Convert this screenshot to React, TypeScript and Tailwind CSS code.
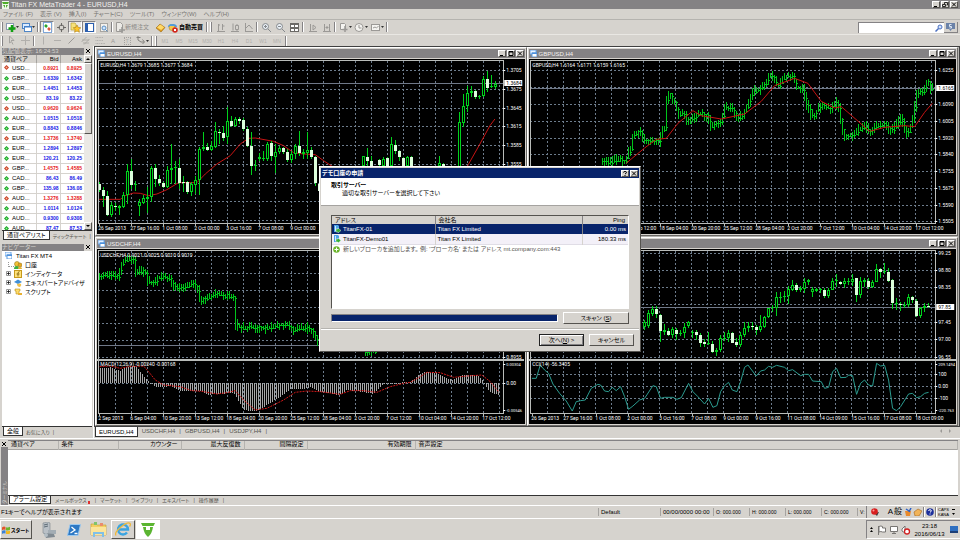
import React from "react";

const RAISED =
  "border border-t-white border-l-white border-r-[#55534f] border-b-[#55534f] bg-[#d6d3ce]";
const GREEN = "#00d21c";

type Pt = [number, number];

const parsePts = (s: string): Pt[] =>
  s
    .trim()
    .split(/\s+/)
    .map((p) => p.split(",").map(Number) as Pt);

// Series are recorded at three units per pixel from a chart origin.
const toLine = (s: string, ox: number, oy: number) =>
  parsePts(s)
    .map(([x, y]) => `${ox + x / 3},${oy + y / 3}`)
    .join(" ");

const valueAt = (pts: Pt[], x: number) => {
  for (let i = 1; i < pts.length; i++) {
    const [x0, y0] = pts[i - 1];
    const [x1, y1] = pts[i];
    if (x <= x1) return y0 + ((y1 - y0) * (x - x0)) / (x1 - x0 || 1);
  }
  return pts[pts.length - 1][1];
};

function Candles({ data, ox, oy }: { data: string; ox: number; oy: number }) {
  return (
    <g shapeRendering="crispEdges">
      {data
        .trim()
        .split(/\s+/)
        .map((c, i) => {
          const [x, hi, lo, top, bot, down] = c.split(",").map(Number);
          const px = Math.round(ox + x / 3);
          const y = (v: number) => Math.round(oy + v / 3);
          const h = Math.max(1, y(bot) - y(top));
          return (
            <g key={i}>
              <rect x={px} y={y(hi)} width={1} height={Math.max(1, y(lo) - y(hi))} fill={GREEN} />
              <rect x={px - 1} y={y(top)} width={3} height={h} fill={down ? "#dcffdc" : GREEN} />
              {!down && h > 2 && <rect x={px} y={y(top) + 1} width={1} height={h - 2} fill="#000" />}
            </g>
          );
        })}
    </g>
  );
}

function Bars({ data, ox, oy, seed }: { data: string; ox: number; oy: number; seed: number }) {
  const pts = parsePts(data);
  let s = seed * 7919;
  const rnd = () => {
    s = (s * 16807) % 2147483647;
    return s / 2147483647;
  };
  const out: React.ReactNode[] = [];
  for (let x = pts[0][0]; x <= pts[pts.length - 1][0]; x += 6) {
    const mid = valueAt(pts, x);
    const next = valueAt(pts, x + 6);
    const px = Math.round(ox + x / 3);
    const hi = Math.round(oy + (Math.min(mid, next) - 3 - rnd() * 14) / 3);
    const lo = Math.round(oy + (Math.max(mid, next) + 3 + rnd() * 14) / 3);
    const c = Math.round(oy + (mid + rnd() * 8 - 4) / 3);
    out.push(<rect key={x} x={px} y={hi} width={1} height={lo - hi} fill="#00c41a" />);
    out.push(<rect key={`t${x}`} x={px} y={c} width={2} height={1} fill="#00c41a" />);
  }
  return <g shapeRendering="crispEdges">{out}</g>;
}

interface ChartProps {
  ox: number;
  top: number;
  title: string;
  rows: number[];
  extraRows?: number[];
  prices: [number, string][];
  priceLine: [number, string];
  times: string[];
  timeStart: number;
  split?: number;
  bottom: number;
  note?: string;
  children: React.ReactNode;
}

function Chart(p: ChartProps) {
  const left = p.ox + 1;
  const right = p.ox + 406;
  const cols = Array.from({ length: 25 }, (_, i) => p.ox + 18 + i * 16);
  return (
    <svg
      viewBox={`${p.ox} ${p.top} 427 175`}
      className="block h-full w-full bg-black"
      fontFamily="Roboto,'Liberation Sans',sans-serif"
      fontSize="5"
      fill="#fff"
      role="img"
      aria-label={p.title}
    >
      <g stroke="#6d7c8c" strokeWidth="1" strokeDasharray="2 2" shapeRendering="crispEdges">
        {cols.map((x) => (
          <line key={x} x1={x + 0.5} x2={x + 0.5} y1={p.top + 2} y2={p.bottom} />
        ))}
        {[...p.rows, ...(p.extraRows ?? [])].map((y) => (
          <line key={y} x1={left} x2={right} y1={y + 0.5} y2={y + 0.5} />
        ))}
      </g>
      <rect x={left} y={p.priceLine[0]} width={right - left} height="1" fill="#6f7888" />
      {p.children}
      <g fill="#b9bcb9" shapeRendering="crispEdges">
        <rect x={left} y={p.top + 1} width={right - left} height="1" />
        <rect x={left} y={p.top + 1} width="1" height={p.bottom - p.top} />
        <rect x={right} y={p.top + 1} width="1" height={p.bottom - p.top} />
        <rect x={left} y={p.bottom} width={right - left} height="1" />
        {p.split && <rect x={p.ox} y={p.split} width="427" height="2" />}
        {p.times.map((_, i) => (
          <rect key={i} x={p.timeStart + 1 + i * 32} y={p.bottom} width="1" height="3" />
        ))}
      </g>
      <rect x={right + 1} y={p.priceLine[0] - 3} width="18" height="6" fill="#fff" />
      <text x={right + 3} y={p.priceLine[0] + 2} fill="#000">
        {p.priceLine[1]}
      </text>
      {p.prices.map(([y, t]) => (
        <g key={y + t}>
          <rect x={right} y={y} width="2" height="1" />
          <text x={right + 3} y={y + 2} fontSize={t.length > 6 ? 4 : 5}>
            {t}
          </text>
        </g>
      ))}
      <text x={p.ox + 3} y={p.top + 8}>
        {p.title}
      </text>
      {p.note && p.split && (
        <text x={p.ox + 3} y={p.split + 7}>
          {p.note}
        </text>
      )}
      {p.times.map((t, i) => (
        <text key={i} x={p.timeStart + i * 32} y={p.bottom + 7}>
          {t}
        </text>
      ))}
    </svg>
  );
}

const EUR_CANDLES = `27,415,445,420,437,1 39,430,490,438,457,1 51,440,516,457,514,1 63,475,518,484,514,0 75,478,500,486,490,1
87,483,512,487,491,0 99,445,492,452,489,0 111,360,480,381,452,0 123,345,435,381,422,1 135,412,440,421,423,0 147,465,515,475,485,0
159,452,480,463,476,0 171,430,508,460,465,0 183,365,475,372,460,0 195,360,430,371,406,1 207,393,425,404,417,1 219,415,432,417,429,1
231,366,432,378,430,0 243,300,420,373,378,0 255,350,420,370,373,0 267,345,435,371,416,1 279,395,445,414,417,1 291,410,450,415,443,1
303,415,455,421,443,0 315,395,450,408,422,0 327,308,452,315,408,0 339,265,320,308,314,0 351,298,322,308,318,1 363,290,322,306,318,0
375,235,312,262,308,0 387,255,300,263,268,1 399,245,290,267,282,1 411,190,300,230,280,0 423,215,250,230,245,1 435,220,250,224,247,0
447,218,240,224,231,1 459,222,260,229,256,1 471,250,310,256,307,1 483,265,392,307,366,1 495,348,380,362,366,0 507,328,350,340,345,0
519,320,350,343,346,0 531,294,350,300,346,0 543,292,350,298,336,1 555,300,388,324,338,0 567,306,330,313,324,0 579,310,330,313,324,1
591,315,355,323,347,1 603,320,357,331,347,0 615,300,345,307,331,0 627,262,335,305,327,1 639,315,345,325,329,0 651,265,345,318,328,0
663,310,345,318,339,1 675,335,425,338,418,1 687,415,445,420,440,1 819,335,365,337,366,0 831,312,365,338,352,1 843,335,365,352,365,1
867,345,365,348,362,1 879,340,365,345,365,0 891,338,365,342,365,1 903,280,365,300,365,0 915,288,330,302,322,1 927,318,350,322,340,1
939,340,365,342,365,1 951,335,365,338,365,0 963,335,365,338,365,1 1047,335,366,358,365,0 1059,356,366,360,366,1 1107,205,380,235,380,0
1119,150,248,187,236,0 1131,125,205,148,187,0 1143,125,158,142,148,0 1155,138,165,141,160,1 1167,152,165,157,160,0 1179,96,158,105,157,0
1191,80,145,105,131,1 1203,92,133,126,130,0 1215,112,135,119,128,0`;
const EUR_MA1 =
  "27,466 90,466 105,455 130,447 150,448 175,455 200,450 230,437 265,416 320,416 345,390 380,360 420,335 450,300 475,283 495,282 550,292 580,305 610,326 640,330 675,332 700,350 730,370";
const EUR_MA2 = "1125,380 1134,362 1169,300 1199,245 1214,225";

const GBP_BARS =
  "-87,350 -60,355 -35,345 -15,355 0,315 4,310 10,268 30,262 40,290 60,290 90,292 97,260 108,250 112,145 125,160 137,180 145,210 165,210 175,235 190,222 210,205 235,220 243,248 260,235 272,240 285,190 305,190 320,222 340,210 352,185 370,140 390,135 410,110 418,90 430,100 445,130 462,95 490,100 500,130 520,135 530,180 545,215 555,210 575,180 600,195 615,175 630,195 635,250 645,275 665,275 690,255 705,245 720,265 740,245 760,240 785,260 800,240 815,220 828,270 840,255 850,220 862,140 880,145 890,110 903,135";
const GBP_MA =
  "-15,358 0,345 40,312 75,286 105,283 140,238 185,200 210,215 270,225 340,210 390,172 430,125 490,103 530,118 570,172 610,192 630,188 650,205 715,262 760,250 820,245 850,248 880,205 903,178";

const CHF_BARS =
  "298,138 345,135 360,140 368,105 378,90 405,85 412,125 430,122 442,130 450,160 470,155 480,140 515,145 525,170 545,172 560,170 580,160 590,165 598,180 604,210 620,205 650,192 700,200 706,205 708,280 730,295 760,290 800,295 840,285 865,280 880,300 920,292 940,300 950,325 960,335";
const MACD =
  "300,415 330,412 345,418 360,422 380,410 405,408 420,425 440,450 450,458 465,470 490,472 510,468 540,482 570,484 600,484 620,494 660,492 700,487 715,515 730,540 750,543 770,542 800,525 840,500 870,478 900,478 930,472 960,485 1015,495 1040,480 1080,485 1120,492 1145,465 1170,458 1230,457 1250,438 1270,425 1300,427 1330,440 1355,450 1385,435 1430,435 1446,450 1460,475 1475,490 1499,495";
const SIGNAL =
  "298,410 330,408 360,415 385,410 430,408 445,425 465,450 490,465 540,470 575,482 605,484 650,492 680,488 705,482 730,510 765,540 800,535 850,510 885,487 920,483 960,485 1020,493 1050,482 1090,482 1130,487 1170,470 1210,460 1230,457 1260,440 1280,427 1320,428 1360,442 1400,438 1445,435 1470,455 1495,485";

const JPY_CANDLES = `40,255,285,262,275,0 52,225,278,235,274,0 64,213,242,222,236,0 76,213,250,222,238,1 88,237,320,240,288,1 100,268,300,286,292,0
112,278,302,287,300,1 124,275,310,283,300,0 136,280,315,284,296,1 148,285,302,293,296,0 160,265,310,275,295,0 172,258,278,262,274,0
184,285,310,290,293,0 196,285,315,292,300,1 208,295,335,300,325,1 220,312,335,322,327,1 232,290,330,325,328,0 244,318,355,326,350,1
256,338,362,345,350,0 268,300,350,308,345,0 280,290,318,308,312,0 292,285,320,294,310,0 304,290,325,294,324,1 316,308,335,322,330,1
328,290,335,300,330,0 340,262,305,278,300,0 352,262,290,272,278,0 364,262,285,274,277,1 376,270,300,277,284,1 388,240,290,274,284,0
400,243,280,245,276,0 412,218,250,220,246,0 424,210,232,217,220,0 436,172,243,187,218,0 448,170,205,185,190,0 460,168,200,182,186,0
472,152,208,163,182,0 484,135,168,150,164,0 496,145,172,150,164,1 508,152,172,160,164,0 520,130,175,142,163,0 532,132,150,136,142,0
544,155,185,163,172,0 556,160,172,163,168,0 568,158,175,162,166,0 580,160,188,164,183,1 592,160,188,164,183,0 604,130,165,137,164,0
616,118,155,135,139,0 628,138,150,140,146,1 640,130,158,138,147,0 652,128,150,137,140,0 664,118,152,133,140,0 676,128,200,130,180,1
688,125,190,138,180,0 700,128,155,136,142,0 712,130,162,138,157,1 724,135,158,140,155,0 736,88,142,102,141,0 748,98,130,102,110,1
760,83,118,107,111,0 772,100,142,110,137,1 784,132,222,136,204,1 796,190,225,204,207,0 808,202,228,207,210,1 820,200,220,210,213,0
832,178,215,187,211,0 844,182,205,187,196,1 856,192,245,197,242,1 868,215,250,218,242,0 880,205,230,213,218,0 892,205,220,212,217,1`;
const CCI =
  "-298,430 -285,430 -273,390 -260,405 -248,415 -235,447 -215,475 -195,498 -177,528 -165,500 -152,497 -138,495 -120,460 -100,448 -92,450 -80,468 -68,470 -57,457 -45,467 -32,455 -20,485 -8,523 5,513 25,495 40,490 65,452 75,455 88,490 100,487 125,487 137,493 150,488 172,445 185,470 200,485 220,507 232,490 245,517 257,512 268,470 280,452 292,442 303,465 317,470 328,440 340,397 350,390 375,423 388,408 400,405 412,394 424,397 436,391 460,397 472,407 484,404 508,422 520,418 532,418 544,438 570,440 580,460 592,457 604,410 616,400 628,428 645,427 652,420 664,422 676,478 688,445 700,435 712,450 724,453 736,385 748,393 760,391 772,435 784,520 796,527 808,515 832,477 844,475 856,488 868,485 880,475 892,472";

const OCT = ["18 Sep 04:00", "20 Sep 20:00", "25 Sep 12:00", "28 Sep 04:00", "2 Oct 20:00", "7 Oct 12:00", "10 Oct 04:00", "14 Oct 20:00", "17 Oct 12:00"];
const SHORT = ["26 Sep 2013", "27 Sep 16:00", "1 Oct 08:00", "2 Oct 00:00", "3 Oct 16:00", "7 Oct 08:00", "9 Oct 00:00", "9 Oct 16:00", "11 Oct 08:00", "14 Oct 09:00", "15 Oct 16:00", "17 Oct 08:00", "18 Oct 09:00"];
const LONG = ["2 Sep 2013", "6 Sep 04:00", "10 Sep 20:00", "13 Sep 12:00", ...OCT];

function EurChart() {
  return (
    <Chart
      ox={97}
      top={59}
      bottom={223}
      title="EURUSD,H4  1.3679 1.3685 1.3677 1.3684"
      rows={[70, 89, 108, 126, 145, 164, 183, 201, 220]}
      prices={[[70, "1.3705"], [89, "1.3675"], [108, "1.3645"], [126, "1.3615"], [145, "1.3585"], [164, "1.3555"], [183, "1.3525"], [201, "1.3495"], [220, "1.3465"]]}
      priceLine={[83, "1.3684"]}
      times={SHORT}
      timeStart={98}
    >
      <polyline points={toLine(EUR_MA1, 90, 44)} fill="none" stroke="#c81414" />
      <polyline points={toLine(EUR_MA2, 90, 44)} fill="none" stroke="#c81414" />
      <Candles data={EUR_CANDLES} ox={90} oy={44} />
    </Chart>
  );
}

function GbpChart() {
  return (
    <Chart
      ox={528}
      top={59}
      bottom={223}
      title="GBPUSD,H4  1.6164 1.6171 1.6159 1.6165"
      rows={[70, 87, 104, 121, 138, 154, 171, 188, 205, 221]}
      prices={[[70, "1.6255"], [104, "1.6090"], [121, "1.6005"], [138, "1.5920"], [154, "1.5840"], [171, "1.5755"], [188, "1.5675"], [205, "1.5590"], [221, "1.5505"]]}
      priceLine={[88, "1.6165"]}
      times={LONG}
      timeStart={530}
    >
      <Bars data={GBP_BARS} ox={630} oy={44} seed={7} />
      <polyline points={toLine(GBP_MA, 630, 44)} fill="none" stroke="#c81414" />
    </Chart>
  );
}

function ChfChart() {
  const pts = parsePts(MACD);
  const hist: React.ReactNode[] = [];
  for (let x = 300; x <= 1499; x += 6) {
    const y = Math.round(230 + valueAt(pts, x) / 3);
    const t = Math.min(y, 383);
    hist.push(<rect key={x} x={x / 3} y={t} width="1" height={Math.max(1, Math.abs(y - 383))} />);
  }
  return (
    <Chart
      ox={97}
      top={249}
      bottom={413}
      split={359}
      title="USDCHF,H4  0.9021 0.9025 0.9010 0.9019"
      note="MACD(12,26,9) -0.00240 -0.00168"
      rows={[256, 273, 290, 307, 323, 340, 357]}
      extraRows={[383]}
      prices={[[256, "0.9390"], [357, "0.8955"], [364, "0.00304"], [383, "0.00"], [410, "-0.00546"]]}
      priceLine={[345, "0.9019"]}
      times={LONG}
      timeStart={98}
    >
      <Bars data={CHF_BARS} ox={0} oy={230} seed={21} />
      <Bars data="1095,362 1125,362" ox={0} oy={230} seed={3} />
      <g fill="#a8a8a8" shapeRendering="crispEdges">{hist}</g>
      <polyline points={toLine(SIGNAL, 0, 230)} fill="none" stroke="#d01818" strokeDasharray="2 1" />
    </Chart>
  );
}

function JpyChart() {
  return (
    <Chart
      ox={528}
      top={249}
      bottom={413}
      split={359}
      title="USDJPY,H4  97.90 97.93 97.78 97.85"
      note="CCI(14) -56.3405"
      rows={[253, 270, 287, 304, 322, 339, 357]}
      extraRows={[374, 386, 398]}
      prices={[[253, "99.25"], [270, "98.80"], [287, "98.35"], [322, "97.45"], [339, "97.00"], [357, "96.55"], [364, "209.1494"], [374, "100"], [386, "0.00"], [398, "-100"], [410, "-220.763"]]}
      priceLine={[307, "97.85"]}
      times={SHORT}
      timeStart={530}
    >
      <Candles data={JPY_CANDLES} ox={630} oy={235} />
      <polyline points={toLine(CCI, 630, 235)} fill="none" stroke="#2b9c90" />
    </Chart>
  );
}

function WindowsMark({ className = "" }: { className?: string }) {
  return (
    <svg viewBox="0 0 7 7" className={`h-[7px] w-[7px] shrink-0 ${className}`} aria-hidden="true">
      <rect x="0" y="0" width="6" height="4" fill="#e8f3ff" stroke="#6aa6e8" />
      <rect x="2" y="3" width="5" height="4" fill="#fff" stroke="#5b9be0" />
      <rect x="2" y="2.500" width="5" height="1.500" fill="#4d90dc" />
    </svg>
  );
}

function CaptionButton({ kind }: { kind: "min" | "max" | "restore" | "close" | "help" }) {
  return (
    <button
      aria-label={kind}
      className={`${RAISED} flex h-[7px] w-2 shrink-0 items-center justify-center`}
    >
      <svg viewBox="0 0 6 5" className="h-[5px] w-[6px]" stroke="#000" fill="none">
        {kind === "min" && <path d="M1 4.500h3" />}
        {kind === "max" && <path d="M1 .5h4v4h-4zM1 1h4" />}
        {kind === "restore" && <path d="M2.500 2v-1.500h3v2.500h-1M.5 2.500h3v2h-3z" strokeWidth=".8" />}
        {kind === "close" && <path d="M1 .5l4 4M5 .5l-4 4" />}
        {kind === "help" && <path d="M1.500 1.500q0-1 1.500-1t1.500 1q0 .8-1.500 1.500M3 4v1" />}
      </svg>
    </button>
  );
}

function ChartWindow({ title, children }: { title: string; children: React.ReactNode }) {
  return (
    <section className="flex min-h-0 min-w-0 flex-col border border-t-white border-r-[#6b6966] border-b-[#6b6966] border-l-white bg-[#d6d3ce] p-px">
      <header className="flex h-[9px] items-center gap-px bg-[#848284] px-px text-[#f3f1ee]">
        <WindowsMark />
        <h2 className="flex-1 pl-px">{title}</h2>
        <div className="flex gap-px">
          <CaptionButton kind="min" />
          <CaptionButton kind="max" />
          <CaptionButton kind="close" />
        </div>
      </header>
      <div className="mt-px min-h-0 flex-1 bg-black">{children}</div>
    </section>
  );
}

function Icon({ name }: { name: string }) {
  const g = "#9b9996";
  const art: Record<string, React.ReactNode> = {
    newchart: (
      <>
        <rect x="1.500" y="1.500" width="7" height="6" fill="#fff" stroke="#8a9ab0" />
        <path d="M7 3v7M3.500 6.500h7" stroke="#13a013" strokeWidth="2.500" />
      </>
    ),
    profiles: (
      <>
        <rect x="1.500" y="1.500" width="7" height="5" fill="#dcecff" stroke="#4f86c6" />
        <rect x="3.500" y="4.500" width="7" height="5" fill="#fff" stroke="#4f86c6" />
        <path d="M3 5h8" stroke="#3b7cd0" />
      </>
    ),
    market: (
      <>
        <rect x="1.500" y=".5" width="8" height="10" fill="#fff" stroke="#7fa6d8" />
        <path d="M3 3l2 2" stroke="#2aa42a" strokeWidth="2.500" />
        <path d="M6 6l2 2" stroke="#e0523a" strokeWidth="2.500" />
      </>
    ),
    cross: (
      <g stroke="#6b6966" fill="none">
        <circle cx="5.500" cy="5.500" r="2.500" />
        <path d="M5.500 1v3M5.500 7v3M1 5.500h3M7 5.500h3" />
      </g>
    ),
    star: (
      <>
        <path d="M1 1h4l1 1v6h-5z" fill="#f7e27a" stroke="#b39a2c" strokeWidth=".6" />
        <path d="M7 3l1.200 2.400 2.600.3-1.900 1.900.5 2.700-2.400-1.300-2.400 1.300.5-2.700-1.900-1.900 2.600-.3z" fill="#ffc72c" stroke="#a87a0c" strokeWidth=".6" />
      </>
    ),
    panel: (
      <>
        <rect x="1.500" y="1.500" width="8" height="8" fill="#fff" stroke="#2d5fae" />
        <rect x="1" y="1" width="3" height="9" fill="#2d5fae" />
      </>
    ),
    tester: (
      <>
        <rect x="2.500" y="1.500" width="7" height="8" fill="#f3f1ed" stroke="#a7a5a1" />
        <circle cx="6" cy="6" r="2" fill="#cfe6ff" stroke="#5b8fc4" />
        <path d="M7.500 7.500l2 2" stroke="#5b8fc4" />
      </>
    ),
    order: (
      <g fill="none" stroke={g}>
        <path d="M2.500.5h4l2 2v7h-6z" fill="#ebe9e5" />
        <path d="M8 5v6M5 8h6" strokeWidth="1.500" />
      </g>
    ),
    gold: (
      <>
        <path d="M1 6l4-4 5 3.500-4 4.500z" fill="#e09a1c" stroke="#9a6a10" strokeWidth=".6" />
        <path d="M2 5.500l3.200-3 4 2.800-3 2.700z" fill="#ffd968" />
      </>
    ),
    expert: (
      <>
        <path d="M1 5a4.500 3 0 0 1 9 0z" fill="#4d9be0" />
        <circle cx="5" cy="5.500" r="3" fill="#f3c64b" stroke="#a37a1a" strokeWidth=".5" />
        <path d="M1 4q4-4 8 0z" fill="#4d9be0" />
        <circle cx="8" cy="8" r="2.800" fill="#d3281e" />
        <rect x="7" y="7" width="2" height="2" fill="#fff" />
      </>
    ),
    bars: <path d="M2 9.500h8M3.500 2v7M3 3h2M7.500 2v6M7.500 4h2" stroke={g} fill="none" />,
    candle: <path d="M2 9.500h8M4 1.500v7M8 2v1M8 8v1M6.500 3.500h3v4h-3z" stroke={g} fill="none" />,
    line: <path d="M2 9.500h8M2.500 1v8M3 6l3-3 3.500 4" stroke={g} fill="none" />,
    zoomin: (
      <g fill="none" stroke="#85898d">
        <circle cx="4.500" cy="4.500" r="3" fill="#e8eef4" />
        <path d="M7 7l3 3M3 4.500h3M4.500 3v3" />
      </g>
    ),
    zoomout: (
      <g fill="none" stroke="#85898d">
        <circle cx="4.500" cy="4.500" r="3" fill="#e8eef4" />
        <path d="M7 7l3 3M3 4.500h3" />
      </g>
    ),
    tile: (
      <>
        <rect x="1" y="1" width="9" height="9" fill="#6b6966" />
        <path d="M2 3h3v2h-3zM6 3h3v2h-3zM2 7h3v2h-3zM6 7h3v2h-3z" fill="#fff" />
      </>
    ),
    shift: <path d="M2 9.500h8M3.500 2v7M6 3l3 2.500-3 2.500z" stroke={g} fill="none" />,
    scroll: <path d="M2 9.500h8M3.500 2v7M8.500 2v7M4.500 5.500h3M6 4v3" stroke={g} fill="none" />,
    indic: (
      <>
        <path d="M2.500 1.500h4l1 1v5h-5z" fill="#f5f4f1" stroke={g} />
        <path d="M7 4v6M4.500 7.500h5" stroke={g} strokeWidth="1.500" />
      </>
    ),
    clock: (
      <>
        <circle cx="5" cy="5.500" r="4" fill="#f5f4f1" stroke={g} />
        <path d="M5 3v3h2.500" stroke={g} fill="none" />
      </>
    ),
    templ: (
      <>
        <rect x="1.500" y="2.500" width="8" height="6" fill="#f5f4f1" stroke={g} />
        <path d="M3 6l2-1 1.500 1 2-2" stroke={g} fill="none" />
      </>
    ),
    cursor: <path d="M3.500 1v7l2-1.500 1.500 3M3.500 1l4.500 4.500h-3" stroke="#a5a3a0" fill="none" />,
    plus: <path d="M5.500 1v9M1 5.500h9" stroke="#b1afac" />,
    vline: <path d="M5.500 1.500v8" stroke="#b1afac" />,
    hline: <path d="M2 5.500h7" stroke="#b1afac" />,
    diag: <path d="M2.500 8.500l6-6" stroke={g} />,
    channel: <path d="M1.500 7l5-5M4 9.500l5.500-5.500M2 5h7M3 8h6" stroke="#a5a3a0" fill="none" strokeWidth=".8" />,
    fib: <path d="M1.500 2.500h8M1.500 5.500h8M1.500 8.500h5M7 8.500h4" stroke="#b1afac" strokeDasharray="1 .6" />,
    arrows: <path d="M1.500 2.500h4M3 1v4l3 2h3M7.500 4.500l2 2.500-2 2" stroke="#85837f" fill="none" />,
  };
  return (
    <svg viewBox="0 0 11 11" className="h-[11px] w-[11px] shrink-0" aria-hidden="true">
      {art[name]}
    </svg>
  );
}

function Tool({ name, pressed, drop }: { name: string; pressed?: boolean; drop?: boolean }) {
  return (
    <button
      aria-label={name}
      className={`flex h-3 shrink-0 items-center justify-center ${drop ? "w-4" : "w-[14px]"} ${
        pressed ? "border border-t-[#848284] border-r-white border-b-white border-l-[#848284] bg-[#ebe9e5]" : ""
      }`}
    >
      <Icon name={name} />
      {drop && (
        <svg viewBox="0 0 3 2" className="h-[2px] w-[3px]" aria-hidden="true">
          <path d="M0 0h3l-1.500 2z" fill="#333" />
        </svg>
      )}
    </button>
  );
}

const Handle = () => <span className="mx-px h-[10px] w-[2px] shrink-0 border-r border-l border-r-[#848284] border-l-white" />;
const Sep = () => <span className="mx-px h-[10px] w-[2px] shrink-0 border-r border-l border-r-white border-l-[#848284]" />;

function Toolbars() {
  return (
    <>
      <div className="flex h-[14px] items-center" role="toolbar">
        <Handle />
        <Tool name="newchart" drop />
        <Tool name="profiles" drop />
        <Sep />
        <Tool name="market" pressed />
        <Tool name="cross" />
        <Tool name="star" pressed />
        <Tool name="panel" pressed />
        <Tool name="tester" />
        <Sep />
        <button className="flex items-center text-[#8e8c89]">
          <Icon name="order" />
          新規注文
        </button>
        <span className="w-1" />
        <Tool name="gold" />
        <button className="flex items-center text-black">
          <Icon name="expert" />
          <span className="pl-px font-bold">自動売買</span>
        </button>
        <span className="w-[2px]" />
        <Sep />
        <Handle />
        <Tool name="bars" />
        <Tool name="candle" />
        <Tool name="line" />
        <Sep />
        <Tool name="zoomin" />
        <Tool name="zoomout" />
        <Tool name="tile" />
        <Sep />
        <Tool name="shift" />
        <Tool name="scroll" />
        <Sep />
        <Tool name="indic" drop />
        <Tool name="clock" drop />
        <Tool name="templ" drop />
        <Sep />
        <span className="flex-1" />
        <div className="mr-[2px] flex h-[11px] items-center">
          <label className="flex h-[11px] w-[86px] items-center border-t border-l border-[#848284] bg-white">
            <input aria-label="検索" className="h-2 w-full min-w-0 bg-white outline-none" />
            <svg viewBox="0 0 8 8" className="mr-px h-2 w-2 shrink-0" fill="none" stroke="#4a6fc0">
              <circle cx="5" cy="3" r="2" fill="#d5e4fa" />
              <path d="M3.500 4.500l-3 3" strokeWidth="1.500" />
            </svg>
          </label>
          <button aria-label="チャット" className="flex h-[11px] w-[14px] items-center justify-center border-r border-b border-[#848284]">
            <svg viewBox="0 0 9 8" className="h-2 w-[9px]">
              <path d="M0 0h9v6h-3l-1.500 2-1.500-2h-3z" fill="#6b82a8" />
              <path d="M5.500 1.500h-2v2h2v1.500h-2" stroke="#dfe8f5" fill="none" />
            </svg>
          </button>
        </div>
      </div>
      <div className="flex h-3 items-center border-t border-[#e9e7e3] text-[#b1afac]" role="toolbar">
        <Handle />
        <Tool name="cursor" />
        <Tool name="plus" />
        <Sep />
        <Tool name="vline" />
        <Tool name="hline" />
        <Tool name="diag" />
        <Tool name="channel" />
        <Tool name="fib" />
        <button className="w-[14px] text-center text-[#9b9996]">A</button>
        <button className="flex w-[14px] justify-center">
          <span className="w-[7px] border border-dotted border-[#a5a3a0] text-center leading-[6px]">T</span>
        </button>
        <Tool name="arrows" drop />
        <Sep />
        <Handle />
        {["M1", "M5", "M15", "M30", "H1", "H4", "D1", "W1", "MN"].map((t) => (
          <button key={t} className="w-[14px] text-center text-[5px]">
            {t}
          </button>
        ))}
        <Sep />
      </div>
    </>
  );
}

const QUOTES: [string, string, string, boolean][] = [
  ["USD...", "0.8921", "0.8925", false],
  ["GBP...", "1.6339", "1.6342", true],
  ["EUR...", "1.4451", "1.4453", true],
  ["USD...", "83.19", "83.22", true],
  ["USD...", "0.9620", "0.9624", false],
  ["AUD...", "1.0515", "1.0518", true],
  ["EUR...", "0.8843", "0.8846", true],
  ["EUR...", "1.3736", "1.3740", false],
  ["EUR...", "1.2894", "1.2897", true],
  ["EUR...", "120.21", "120.25", true],
  ["GBP...", "1.4575", "1.4585", false],
  ["CAD...", "86.43", "86.49", true],
  ["GBP...", "135.98", "136.08", true],
  ["AUD...", "1.3276", "1.3288", false],
  ["AUD...", "1.0114", "1.0124", true],
  ["AUD...", "0.9300", "0.9308", true],
  ["AUD...", "87.47", "87.53", true],
];

function PanelTitle({ children }: { children: React.ReactNode }) {
  return (
    <header className="flex h-2 shrink-0 items-center">
      <h2 className="h-[7px] flex-1 bg-[#848284] leading-[7px] whitespace-nowrap text-[#d6d3ce]">{children}</h2>
      <button aria-label="閉じる" className="flex h-[7px] w-2 items-center justify-center">
        <svg viewBox="0 0 4 4" className="h-1 w-1" stroke="#000">
          <path d="M0 0l4 4M4 0l-4 4" />
        </svg>
      </button>
    </header>
  );
}

function PanelTabs({ tabs }: { tabs: string[] }) {
  return (
    <div className="flex h-[10px] shrink-0 pl-px whitespace-nowrap" role="tablist">
      {tabs.map((t, i) => (
        <button
          key={t}
          role="tab"
          aria-selected={i === 0}
          className={
            i === 0
              ? "h-[9px] border border-t-0 border-[#333] bg-white px-[3px] text-black"
              : "h-[9px] pl-[3px] text-[5px] text-[#55534f] after:pl-[3px] after:content-['|']"
          }
        >
          {t}
        </button>
      ))}
    </div>
  );
}

function MarketWatch() {
  return (
    <section className="flex h-[194px] shrink-0 flex-col">
      <PanelTitle>気配値表示: 16:24:53</PanelTitle>
      <div className="flex min-h-0 flex-1 overflow-hidden border-b border-[#333] bg-white">
        <div className="flex-1 overflow-hidden">
          <table className="w-full table-fixed border-collapse">
            <thead>
              <tr className="h-2 bg-[#d6d3ce]">
                <th className="w-[34px] border-r border-[#a5a3a0] p-0 pl-[2px] text-left leading-[7px] font-normal">通貨ペア</th>
                <th className="border-r border-[#a5a3a0] p-0 pr-px text-right leading-[7px] font-normal">Bid</th>
                <th className="p-0 pr-[2px] text-right leading-[7px] font-normal">Ask</th>
              </tr>
            </thead>
            <tbody>
              {QUOTES.map(([s, b, a, up], i) => (
                <tr key={i} className="h-[10px] border-b border-[#d6d3ce]">
                  <td className="border-r border-[#d6d3ce] p-0">
                    <span className="flex items-center gap-[3px] pl-[2px]">
                      <svg viewBox="0 0 5 5" className="h-[5px] w-[5px]">
                        <path d="M2.500 0l2.500 2.500-2.500 2.500-2.500-2.500z" fill={up ? "#1ea82a" : "#c8452a"} />
                        <path d="M2.500 1.500l1 1-1 1-1-1z" fill={up ? "#8df08d" : "#ffb89c"} />
                      </svg>
                      {s}
                    </span>
                  </td>
                  <td className={`border-r border-[#d6d3ce] p-0 pr-px text-right text-[5px] font-bold ${up ? "text-[#1414e6]" : "text-[#e61414]"}`}>{b}</td>
                  <td className={`p-0 pr-[2px] text-right text-[5px] font-bold ${up ? "text-[#1414e6]" : "text-[#e61414]"}`}>{a}</td>
                </tr>
              ))}
            </tbody>
          </table>
        </div>
        <div className="flex w-2 flex-col bg-[#ebe9e5]">
          <button aria-label="上へ" className={`${RAISED} flex h-2 items-center justify-center`}>
            <svg viewBox="0 0 4 2" className="h-[2px] w-1"><path d="M0 2h4l-2-2z" /></svg>
          </button>
          <div className={`${RAISED} h-[71px]`} />
          <div className="flex-1" />
          <button aria-label="下へ" className={`${RAISED} flex h-2 items-center justify-center`}>
            <svg viewBox="0 0 4 2" className="h-[2px] w-1"><path d="M0 0h4l-2 2z" /></svg>
          </button>
        </div>
      </div>
      <PanelTabs tabs={["通貨ペアリスト", "ティックチャート"]} />
    </section>
  );
}

function TreeIcon({ kind }: { kind: number }) {
  return (
    <svg viewBox="0 0 8 8" className="h-2 w-2 shrink-0" aria-hidden="true">
      {kind === 0 && (
        <>
          <circle cx="3" cy="3" r="2.500" fill="#f3c23a" stroke="#8a6a10" strokeWidth=".5" />
          <circle cx="6" cy="4" r="2" fill="#e8a820" stroke="#8a6a10" strokeWidth=".5" />
          <path d="M0 8q0-3 2.500-3t2.500 3z" fill="#3fae3f" />
          <path d="M4 8q0-2 2-2t2 2z" fill="#e8b030" />
        </>
      )}
      {kind === 1 && (
        <>
          <rect x=".5" y=".5" width="7" height="7" fill="#ffe27a" stroke="#c79a1c" />
          <path d="M5.500 1.500q-1.500 0-1.500 2v3M2.500 4h3" stroke="#7a5a08" fill="none" strokeWidth=".8" />
        </>
      )}
      {kind === 2 && (
        <>
          <path d="M0 3l4-2.500 4 2.500-4 2z" fill="#3f8fd8" />
          <path d="M3 5q3-1 4 0t-1 3q-3 0-3-3z" fill="#f0c04a" />
        </>
      )}
      {kind === 3 && (
        <>
          <path d="M1 1h5v2h-1v3h-3v-3h-1z" fill="#ffdc6a" stroke="#b8901c" strokeWidth=".6" />
          <path d="M4 5h4v2h-4z" fill="#e8b030" />
        </>
      )}
    </svg>
  );
}

function Navigator() {
  return (
    <section className="mt-[2px] flex min-h-0 flex-1 flex-col">
      <PanelTitle>ナビゲーター</PanelTitle>
      <ul className="min-h-0 flex-1 border-b border-[#333] bg-white pl-[2px]">
        <li className="flex h-[9px] items-center gap-1 pl-px">
          <WindowsMark />
          Titan FX MT4
        </li>
        {["口座", "インディケータ", "エキスパートアドバイザ", "スクリプト"].map((t, i) => (
          <li key={t} className="flex h-[9px] items-center whitespace-nowrap">
            <span className="flex w-[10px] items-center pl-[2px]">
              {i > 0 ? (
                <svg viewBox="0 0 5 5" className="h-[5px] w-[5px]" fill="#fff" stroke="#999">
                  <path d="M.5.5h4v4h-4z" />
                  <path d="M1 2.500h3M2.500 1v3" stroke="#000" strokeWidth=".7" />
                </svg>
              ) : (
                <span className="ml-[2px] h-[5px] w-[6px] border-b border-l border-dotted border-[#999]" />
              )}
            </span>
            <TreeIcon kind={i} />
            <span className="pl-[3px]">{t}</span>
          </li>
        ))}
      </ul>
      <PanelTabs tabs={["全般", "お気に入り"]} />
    </section>
  );
}

function Terminal() {
  const cols: [string, string][] = [
    ["通貨ペア", "w-[50px] text-left"],
    ["条件", "w-[60px] text-left"],
    ["カウンター", "w-[63px] text-right"],
    ["最大反復数", "w-[63px] text-right"],
    ["間隔設定", "w-[63px] text-right"],
    ["有効期限", "w-[108px] text-right"],
    ["音声設定", "text-left"],
  ];
  return (
    <section className="flex h-[67px] shrink-0 border-t border-white pt-px">
      <div className="flex w-2 shrink-0 flex-col items-center">
        <button aria-label="閉じる" className="flex h-[7px] w-2 items-center justify-center">
          <svg viewBox="0 0 4 4" className="h-1 w-1" stroke="#000">
            <path d="M0 0l4 4M4 0l-4 4" />
          </svg>
        </button>
        <h2 className="w-[7px] flex-1 rotate-180 bg-[#848284] pt-px text-[5px] leading-[7px] whitespace-nowrap text-[#d6d3ce] [text-orientation:sideways] [writing-mode:vertical-rl]">
          ターミナル
        </h2>
      </div>
      <div className="flex min-w-0 flex-1 flex-col pr-[2px]">
        <div className="flex-1 border-t border-b border-t-[#848284] border-b-[#333] bg-white">
          <table className="w-full table-fixed border-collapse">
            <thead>
              <tr className="h-2 border-b border-[#a5a3a0] bg-[#d6d3ce]">
                {cols.map(([t, c]) => (
                  <th key={t} className={`${c} border-r border-[#b5b3af] p-0 px-[3px] leading-[7px] font-normal`}>
                    {t}
                  </th>
                ))}
              </tr>
            </thead>
          </table>
        </div>
        <div className="flex h-[9px] items-start pl-px text-[#55534f]" role="tablist">
          <button role="tab" aria-selected="true" className="h-2 border border-t-0 border-[#333] bg-white px-[3px] leading-[7px] text-black">
            アラーム設定
          </button>
          {["メールボックス", "マーケット", "ライブラリ", "エキスパート", "操作履歴"].map((t, i) => (
            <button key={t} role="tab" className="flex items-end pl-1 text-[5px] leading-[8px]">
              {t}
              {i === 0 && <span className="mx-px h-[3px] w-[2px] bg-[#e03030]" />}
              <span className="pl-1">|</span>
            </button>
          ))}
        </div>
      </div>
    </section>
  );
}

function StatusBar() {
  const cells: [string, string][] = [
    ["Default", "w-[62px]"],
    ["00/00/0000 00:00", "w-[53px]"],
    ["O: 000.000", "w-9 text-[5px]"],
    ["H: 000.000", "w-9 text-[5px]"],
    ["L: 000.000", "w-9 text-[5px]"],
    ["C: 000.000", "w-9 text-[5px]"],
    ["V:", "w-[9px] text-[5px]"],
  ];
  return (
    <footer className="flex h-[13px] shrink-0 items-center border-t border-white">
      <p className="flex-1 pl-px">F1キーでヘルプが表示されます</p>
      {cells.map(([t, w]) => (
        <span key={t} className={`${w} shrink-0 overflow-hidden border-l border-[#a5a3a0] pl-[2px] whitespace-nowrap`}>
          {t}
        </span>
      ))}
      <div className="flex h-3 w-[94px] shrink-0 items-center border-l border-[#848284] pl-1">
        <svg viewBox="0 0 8 8" className="h-2 w-2">
          <path d="M3 5l3 3 2-4z" fill="#3a3a3a" />
          <circle cx="3.500" cy="3.500" r="3.300" fill="#d81e1e" />
          <circle cx="2.500" cy="2.500" r="1" fill="#ff9a9a" />
        </svg>
        <span className="w-[15px] pr-px text-right text-[8px]">A</span>
        <span className="w-[9px] text-[8px]">般</span>
        <svg viewBox="0 0 18 8" className="ml-px h-2 w-[18px]">
          <path d="M1 3h6l-1 5h-4z" fill="#e88a2c" />
          <path d="M2 1l3 2M7 0l-2 4" stroke="#2d62c8" strokeWidth="1.500" />
          <path d="M10 4l4-3 4 2-3 5h-4z" fill="#f1b45a" stroke="#a5641a" strokeWidth=".6" />
        </svg>
        <Sep />
        <svg viewBox="0 0 8 8" className="h-2 w-2">
          <circle cx="4" cy="4" r="3.800" fill="#1c2f9c" />
          <path d="M2.700 3q0-1.300 1.300-1.300t1.300 1.200q0 .8-1.300 1.400M4 5.500v1" stroke="#fff" fill="none" />
        </svg>
        <Sep />
        <span className="flex flex-col text-[4px] leading-[5px]">
          <span>CAPS</span>
          <span>KANA</span>
        </span>
        <svg viewBox="0 0 3 8" className="ml-[3px] h-2 w-[3px]">
          <path d="M0 1h3v1h-3zM0 5h3l-1.500 2z" />
        </svg>
      </div>
    </footer>
  );
}

function Taskbar() {
  return (
    <nav className="flex h-[22px] shrink-0 items-center border-t border-white">
      <button className={`${RAISED} flex h-[19px] w-8 shrink-0 items-center gap-px pl-px text-[5px] font-bold whitespace-nowrap`}>
        <svg viewBox="0 0 8 8" className="h-2 w-2 shrink-0">
          <path d="M0 1.500q2-1.500 3.500-.5v3q-2-1-3.500.5z" fill="#e2542a" />
          <path d="M4 1.200q2 1 4-.4v3q-2 1.400-4 .4z" fill="#6cb52c" />
          <path d="M0 5q2-1.300 3.500-.4v3q-2-1-3.500.4z" fill="#3b82d6" />
          <path d="M4 4.800q2 1 4-.4v3q-2 1.400-4 .4z" fill="#f2b81c" />
        </svg>
        スタート
      </button>
      <button aria-label="サーバー マネージャー" className="ml-1 flex w-[25px] justify-center">
        <svg viewBox="0 0 16 16" className="h-4 w-4">
          <path d="M2 1l5-1 2 1v10l-5 1-2-1z" fill="#b9c0c6" stroke="#7c858c" strokeWidth=".6" />
          <path d="M3 3l4-1M3 5l4-1" stroke="#5c6a74" />
          <rect x="7" y="8" width="8" height="4" fill="#a3adb4" />
          <path d="M3 11l10 1 1 3-9 1z" fill="#808a92" />
          <circle cx="5" cy="13" r="2" fill="#b4bec5" />
        </svg>
      </button>
      <button aria-label="PowerShell" className="flex w-[25px] justify-center">
        <svg viewBox="0 0 14 12" className="h-3 w-[14px]">
          <path d="M3 .5h10.500l-2.500 11h-10.500z" fill="#2c78c4" stroke="#9cc8ee" />
          <path d="M4.500 3l3.500 3-4.500 3M7.500 9.500h3" stroke="#fff" strokeWidth="1.300" fill="none" />
        </svg>
      </button>
      <button aria-label="エクスプローラー" className="flex w-[25px] justify-center">
        <svg viewBox="0 0 17 15" className="h-[15px] w-[17px]">
          <path d="M1 2h5l1 1h9v10h-15z" fill="#f2cf63" stroke="#c59a2c" strokeWidth=".6" />
          <path d="M4 0h3v3h-3z" fill="#7ec46a" />
          <path d="M10 1h3v3h-3z" fill="#eb8b6c" />
          <path d="M1 5h15v8h-15z" fill="#fbe49a" />
          <path d="M3 15v-5h11v5h-2v-3h-7v3z" fill="#7fc0e8" />
        </svg>
      </button>
      <button aria-label="Internet Explorer" className={`${RAISED} flex h-[19px] w-6 items-center justify-center`}>
        <svg viewBox="0 0 16 15" className="h-[15px] w-4">
          <path d="M12 10.500a5 5 0 1 1 1-3h-9" fill="none" stroke="#3ba4e0" strokeWidth="2.400" />
          <path d="M1 13.500q-2-3 5-8.500t9-3.500q1 1-.5 3" fill="none" stroke="#f0b93a" strokeWidth="1.300" />
        </svg>
      </button>
      <button aria-label="Titan FX MetaTrader 4" className="ml-px flex h-[19px] w-6 items-center justify-center bg-white">
        <svg viewBox="0 0 14 14" className="h-[14px] w-[14px]" fill="#5bb531">
          <path d="M0 0h14l-1.500 3h-11z" />
          <path d="M2 4h3v3h2v7q-4-3-5-10z" />
          <path d="M12 4h-3v3h-2v7q4-3 5-10z" />
        </svg>
      </button>
      <span className="flex-1" />
      <div className="flex h-[19px] w-[94px] shrink-0 items-center border border-r-0 border-t-[#848284] border-b-white border-l-[#848284] pl-[3px]">
        <svg viewBox="0 0 3 5" className="h-[5px] w-[3px]"><path d="M0 2l1.500-2 1.500 2zM0 5l1.500-2 1.500 2z" /></svg>
        <svg viewBox="0 0 34 10" className="ml-1 h-[10px] w-[34px]" fill="#fff" stroke="#777572">
          <path d="M1.500 1v9M2 1.500q2-1 3.500 0v1.500h3v4h-3q-1.500-1-3.500 0z" />
          <path d="M13.500 1.500h7v5h-7zM15 8.500h4M17 6.500v2" />
          <path d="M25 4l3-3v7l-3-2z" />
          <circle cx="30" cy="6.500" r="2.500" stroke="#d02020" strokeWidth="1.300" />
        </svg>
        <time className="flex-1 text-center leading-[8px]">
          <span className="block">23:18</span>
          <span className="block">2016/06/13</span>
        </time>
        <svg viewBox="0 0 8 7" className="mr-[2px] ml-[2px] h-[7px] w-2">
          <rect width="8" height="6" fill="#2f6fc0" />
          <rect y="5" width="8" height="2" fill="#1c3f78" />
        </svg>
      </div>
    </nav>
  );
}

function ServerIcon() {
  return (
    <svg viewBox="0 0 8 8" className="h-2 w-2 shrink-0" aria-hidden="true">
      <path d="M1 0h4l1 1v6h-5z" fill="#4da3e8" />
      <path d="M2 1h1v5h-1z" fill="#cfe8ff" />
      <path d="M3 4h2v-1l3 2.500-3 2.500v-1h-2z" fill="#35b035" stroke="#fff" strokeWidth=".4" />
    </svg>
  );
}

function DemoDialog() {
  return (
    <div
      role="dialog"
      aria-labelledby="dlg-title"
      className={`${RAISED} absolute top-[166px] left-[319px] w-[322px] p-px`}
    >
      <header className="flex h-[10px] items-center gap-px bg-[#08246b] pr-px text-white">
        <h2 id="dlg-title" className="flex-1 pl-px font-bold">デモ口座の申請</h2>
        <CaptionButton kind="help" />
        <CaptionButton kind="close" />
      </header>
      <div className="h-7 border-b border-[#a5a3a0] bg-white pt-[3px] pl-[10px]">
        <p className="font-bold">取引サーバー</p>
        <p className="pl-[11px]">適切な取引サーバーを選択して下さい</p>
      </div>
      <div className="px-[10px] pt-[9px] pb-1">
        <div className="h-[94px] border border-t-[#55534f] border-r-white border-b-white border-l-[#55534f] bg-white">
          <table className="w-full table-fixed border-collapse">
            <thead>
              <tr className="h-2 bg-[#d6d3ce]">
                <th className="w-[103px] border-r border-[#848284] p-0 pl-[3px] text-left font-normal">アドレス</th>
                <th className="w-[147px] border-r border-[#848284] p-0 pl-[3px] text-left font-normal">会社名</th>
                <th className="p-0 pr-[3px] text-right font-normal">Ping</th>
              </tr>
            </thead>
            <tbody>
              <tr className="h-[10px] bg-[#08246b] text-white">
                <td className="border-r border-[#848284] p-0">
                  <span className="flex items-center gap-[2px] pl-px"><ServerIcon />TitanFX-01</span>
                </td>
                <td className="border-r border-[#848284] p-0 pl-[2px]">Titan FX Limited</td>
                <td className="p-0 pr-[2px] text-right">0.00 ms</td>
              </tr>
              <tr className="h-[10px] border-b border-[#e0dde6] bg-[#f3f0f8]">
                <td className="border-r border-[#d6d3ce] p-0">
                  <span className="flex items-center gap-[2px] pl-px"><ServerIcon />TitanFX-Demo01</span>
                </td>
                <td className="border-r border-[#d6d3ce] p-0 pl-[2px]">Titan FX Limited</td>
                <td className="p-0 pr-[2px] text-right">180.33 ms</td>
              </tr>
              <tr className="h-[10px] text-[#55534f]">
                <td colSpan={3} className="p-0">
                  <span className="flex items-center gap-[3px] pl-px whitespace-nowrap">
                    <svg viewBox="0 0 7 7" className="h-[7px] w-[7px] shrink-0">
                      <circle cx="3.500" cy="3.500" r="3.300" fill="#6cb52c" />
                      <path d="M3.500 1.500v4M1.500 3.500h4" stroke="#fff" />
                    </svg>
                    新しいブローカを追加します。 例: 'ブローカ名' または アドレス mt.company.com:443
                  </span>
                </td>
              </tr>
            </tbody>
          </table>
        </div>
        <div className="mt-[3px] flex items-center gap-[5px]">
          <div
            role="progressbar"
            aria-label="スキャンの進行状況"
            aria-valuenow={100}
            className="h-2 flex-1 border border-t-[#848284] border-r-white border-b-white border-l-[#848284] bg-[#08246b]"
          />
          <button className={`${RAISED} h-3 w-[66px]`}>スキャン (<u>S</u>)</button>
        </div>
      </div>
      <div className="flex justify-end gap-[5px] border-t border-[#b5b3af] px-[5px] pt-[5px] pb-[4px] shadow-[inset_0_1px_0_#fff]">
        <button className="h-3 w-[45px] border border-[#222] bg-[#d6d3ce] leading-[8px] shadow-[inset_1px_1px_0_#fff,inset_-1px_-1px_0_#848284]">
          次へ(<u>N</u>) &gt;
        </button>
        <button className={`${RAISED} h-3 w-[45px]`}>キャンセル</button>
      </div>
    </div>
  );
}

export default function App() {
  return (
    <div className="relative flex h-screen flex-col overflow-hidden bg-[#d6d3ce] font-['Liberation_Sans','Noto_Sans_CJK_JP',sans-serif] text-[6px] leading-[8px] text-black [font-feature-settings:'palt']">
      <header className="flex h-[9px] shrink-0 items-center gap-px bg-[#848284] px-[2px] text-[#f3f1ee]">
        <svg viewBox="0 0 7 8" className="h-2 w-[7px]">
          <rect width="7" height="8" fill="#eef7ea" />
          <path d="M0 1h7l-1 2h-5zM1 4h2v3zM6 4h-2v3z" fill="#4fae2a" />
        </svg>
        <h1 className="flex-1 pl-px text-[7px]">Titan FX MetaTrader 4 - EURUSD,H4</h1>
        <CaptionButton kind="min" />
        <CaptionButton kind="restore" />
        <CaptionButton kind="close" />
      </header>
      <nav className="flex h-[11px] shrink-0 items-center gap-[7px] border-b border-[#b5b3af] pl-[3px] whitespace-nowrap text-[#777572]">
        {["ファイル (F)", "表示 (V)", "挿入(I)", "チャート(C)", "ツール(T)", "ウィンドウ(W)", "ヘルプ(H)"].map((m) => (
          <button key={m}>{m}</button>
        ))}
      </nav>
      <Toolbars />
      <main className="flex min-h-0 flex-1">
        <aside className="flex w-[94px] shrink-0 flex-col border-r border-white pt-px pr-px pb-px pl-[2px]">
          <MarketWatch />
          <Navigator />
        </aside>
        <div className="flex min-w-0 flex-1 flex-col">
          <div className="grid min-h-0 flex-1 grid-cols-2 grid-rows-2 gap-y-px border border-[#404040] bg-[#b5b3af] pr-px">
            <ChartWindow title="EURUSD,H4"><EurChart /></ChartWindow>
            <ChartWindow title="GBPUSD,H4"><GbpChart /></ChartWindow>
            <ChartWindow title="USDCHF,H4"><ChfChart /></ChartWindow>
            <ChartWindow title="USDJPY,H4"><JpyChart /></ChartWindow>
          </div>
          <div className="flex h-[11px] shrink-0 items-start pr-2 pl-px text-[#55534f]" role="tablist">
            <button role="tab" aria-selected="true" className="h-[10px] border border-t-0 border-[#333] bg-white px-[3px] text-black">
              EURUSD,H4
            </button>
            {["USDCHF,H4", "GBPUSD,H4", "USDJPY,H4"].map((t) => (
              <button key={t} role="tab" className="flex gap-1 pl-1 leading-[9px]">
                {t}
                <span>|</span>
              </button>
            ))}
            <span className="flex-1" />
            <svg viewBox="0 0 12 4" className="mt-[2px] h-1 w-3" fill="#9b9996">
              <path d="M2 0v4l-2-2zM9 0v4l2-2z" />
            </svg>
          </div>
        </div>
      </main>
      <Terminal />
      <StatusBar />
      <Taskbar />
      <DemoDialog />
    </div>
  );
}
